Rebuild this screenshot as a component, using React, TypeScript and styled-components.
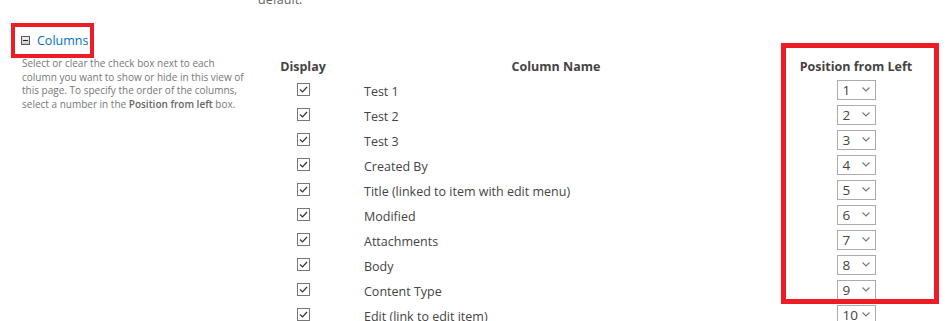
import React from "react"
import styled, { createGlobalStyle } from "styled-components"

const GlobalStyle = createGlobalStyle`
  html, body {
    margin: 0;
    padding: 0;
    background: #fff;
    overflow: hidden;
  }
  body {
    font-family: "Open Sans", "Noto Sans", "Liberation Sans", sans-serif;
    color: #444;
  }
`

const Page = styled.div`
  display: flex;
  align-items: flex-start;
  padding-left: 11px;
  height: 321px;
`

const Side = styled.div`
  width: 247px;
  flex-shrink: 0;
  padding-top: 23px;
`

const SectionHead = styled.div`
  display: inline-flex;
  align-items: center;
  gap: 7px;
  height: 27px;
  padding: 0 2px 0 6px;
  border: 4px solid #ee1c25;
`

const SectionLink = styled.a`
  font-size: 12.5px;
  color: #0072c6;
  text-decoration: none;
  line-height: 17px;
`

const Hint = styled.p`
  margin: -1px 0 0 11px;
  font-size: 10px;
  line-height: 13.7px;
  color: #777;

  b {
    font-weight: 600;
    color: #666;
  }
`

const Main = styled.div`
  flex: 1;
`

const PrevText = styled.div`
  margin-top: -9px;
  font-size: 12.5px;
  line-height: 17px;
  color: #666;
`

const Table = styled.div`
  display: grid;
  grid-template-columns: 66px 440px 160px;
  grid-template-rows: 34px;
  grid-auto-rows: 25px;
  margin: 35px 0 0 12px;
`

const HeadCell = styled.div<{ $col: number }>`
  grid-row: 1;
  grid-column: ${(p) => p.$col};
  align-self: end;
  padding-bottom: 2px;
  text-align: center;
  font-size: 12.5px;
  font-weight: 700;
  line-height: 17px;
  color: #444;
`

const Cell = styled.div<{ $col: number; $row: number }>`
  grid-row: ${(p) => p.$row};
  grid-column: ${(p) => p.$col};
  display: flex;
  align-items: center;
  justify-content: ${(p) => (p.$col === 2 ? "flex-start" : "center")};
  padding-left: ${(p) => (p.$col === 2 ? "28px" : "0")};
  font-size: 12.5px;
  color: #444;
  white-space: nowrap;
`

const Label = styled.span`
  padding-top: 3px;
`

const Highlight = styled.div`
  grid-column: 3;
  grid-row: 1 / span 10;
  margin: 0 -3px -2px 5px;
  border: 5px solid #ee1c25;
  pointer-events: none;
`

const Select = styled.div`
  box-sizing: border-box;
  display: flex;
  align-items: center;
  justify-content: space-between;
  width: 39px;
  height: 20px;
  padding: 0 5px 0 5px;
  border: 1px solid #ababab;
  background: #fff;
  font-size: 13.5px;
  color: #444;
`

const Expander = () => (
  <svg width="9" height="9" viewBox="0 0 9 9">
    <defs>
      <linearGradient id="exg" x1="0" y1="0" x2="0" y2="1">
        <stop offset="0" stopColor="#f4f4f4" />
        <stop offset="1" stopColor="#c8c8c8" />
      </linearGradient>
    </defs>
    <rect x="0.5" y="0.5" width="8" height="8" fill="url(#exg)" stroke="#5a5a5a" />
    <rect x="2" y="4" width="5" height="1" fill="#222" />
  </svg>
)

const Check = () => (
  <svg width="13" height="13" viewBox="0 0 13 13">
    <rect x="0.5" y="0.5" width="12" height="12" fill="#fff" stroke="#777" />
    <path d="M3 6.5 L5.5 9 L10 4" fill="none" stroke="#333" strokeWidth="1.2" />
  </svg>
)

const Chevron = () => (
  <svg width="8" height="5" viewBox="0 0 8 5">
    <path d="M0.5 0.5 L4 4 L7.5 0.5" fill="none" stroke="#777" strokeWidth="1.1" />
  </svg>
)

const columns = [
  "Test 1",
  "Test 2",
  "Test 3",
  "Created By",
  "Title (linked to item with edit menu)",
  "Modified",
  "Attachments",
  "Body",
  "Content Type",
  "Edit (link to edit item)",
]

const App: React.FC = () => (
  <>
    <GlobalStyle />
    <Page>
      <Side>
        <SectionHead>
          <Expander />
          <SectionLink href="#">Columns</SectionLink>
        </SectionHead>
        <Hint>
          Select or clear the check box next to each<br />
          column you want to show or hide in this view of<br />
          this page. To specify the order of the columns,<br />
          select a number in the <b>Position from left</b> box.
        </Hint>
      </Side>
      <Main>
        <PrevText>default.</PrevText>
        <Table>
          <HeadCell $col={1}>Display</HeadCell>
          <HeadCell $col={2}>Column Name</HeadCell>
          <HeadCell $col={3}>Position from Left</HeadCell>
          {columns.map((name, i) => (
            <React.Fragment key={name}>
              <Cell $col={1} $row={i + 2}>
                <Check />
              </Cell>
              <Cell $col={2} $row={i + 2}>
                <Label>{name}</Label>
              </Cell>
              <Cell $col={3} $row={i + 2}>
                <Select>
                  <span>{i + 1}</span>
                  <Chevron />
                </Select>
              </Cell>
            </React.Fragment>
          ))}
          <Highlight />
        </Table>
      </Main>
    </Page>
  </>
)

export default App
